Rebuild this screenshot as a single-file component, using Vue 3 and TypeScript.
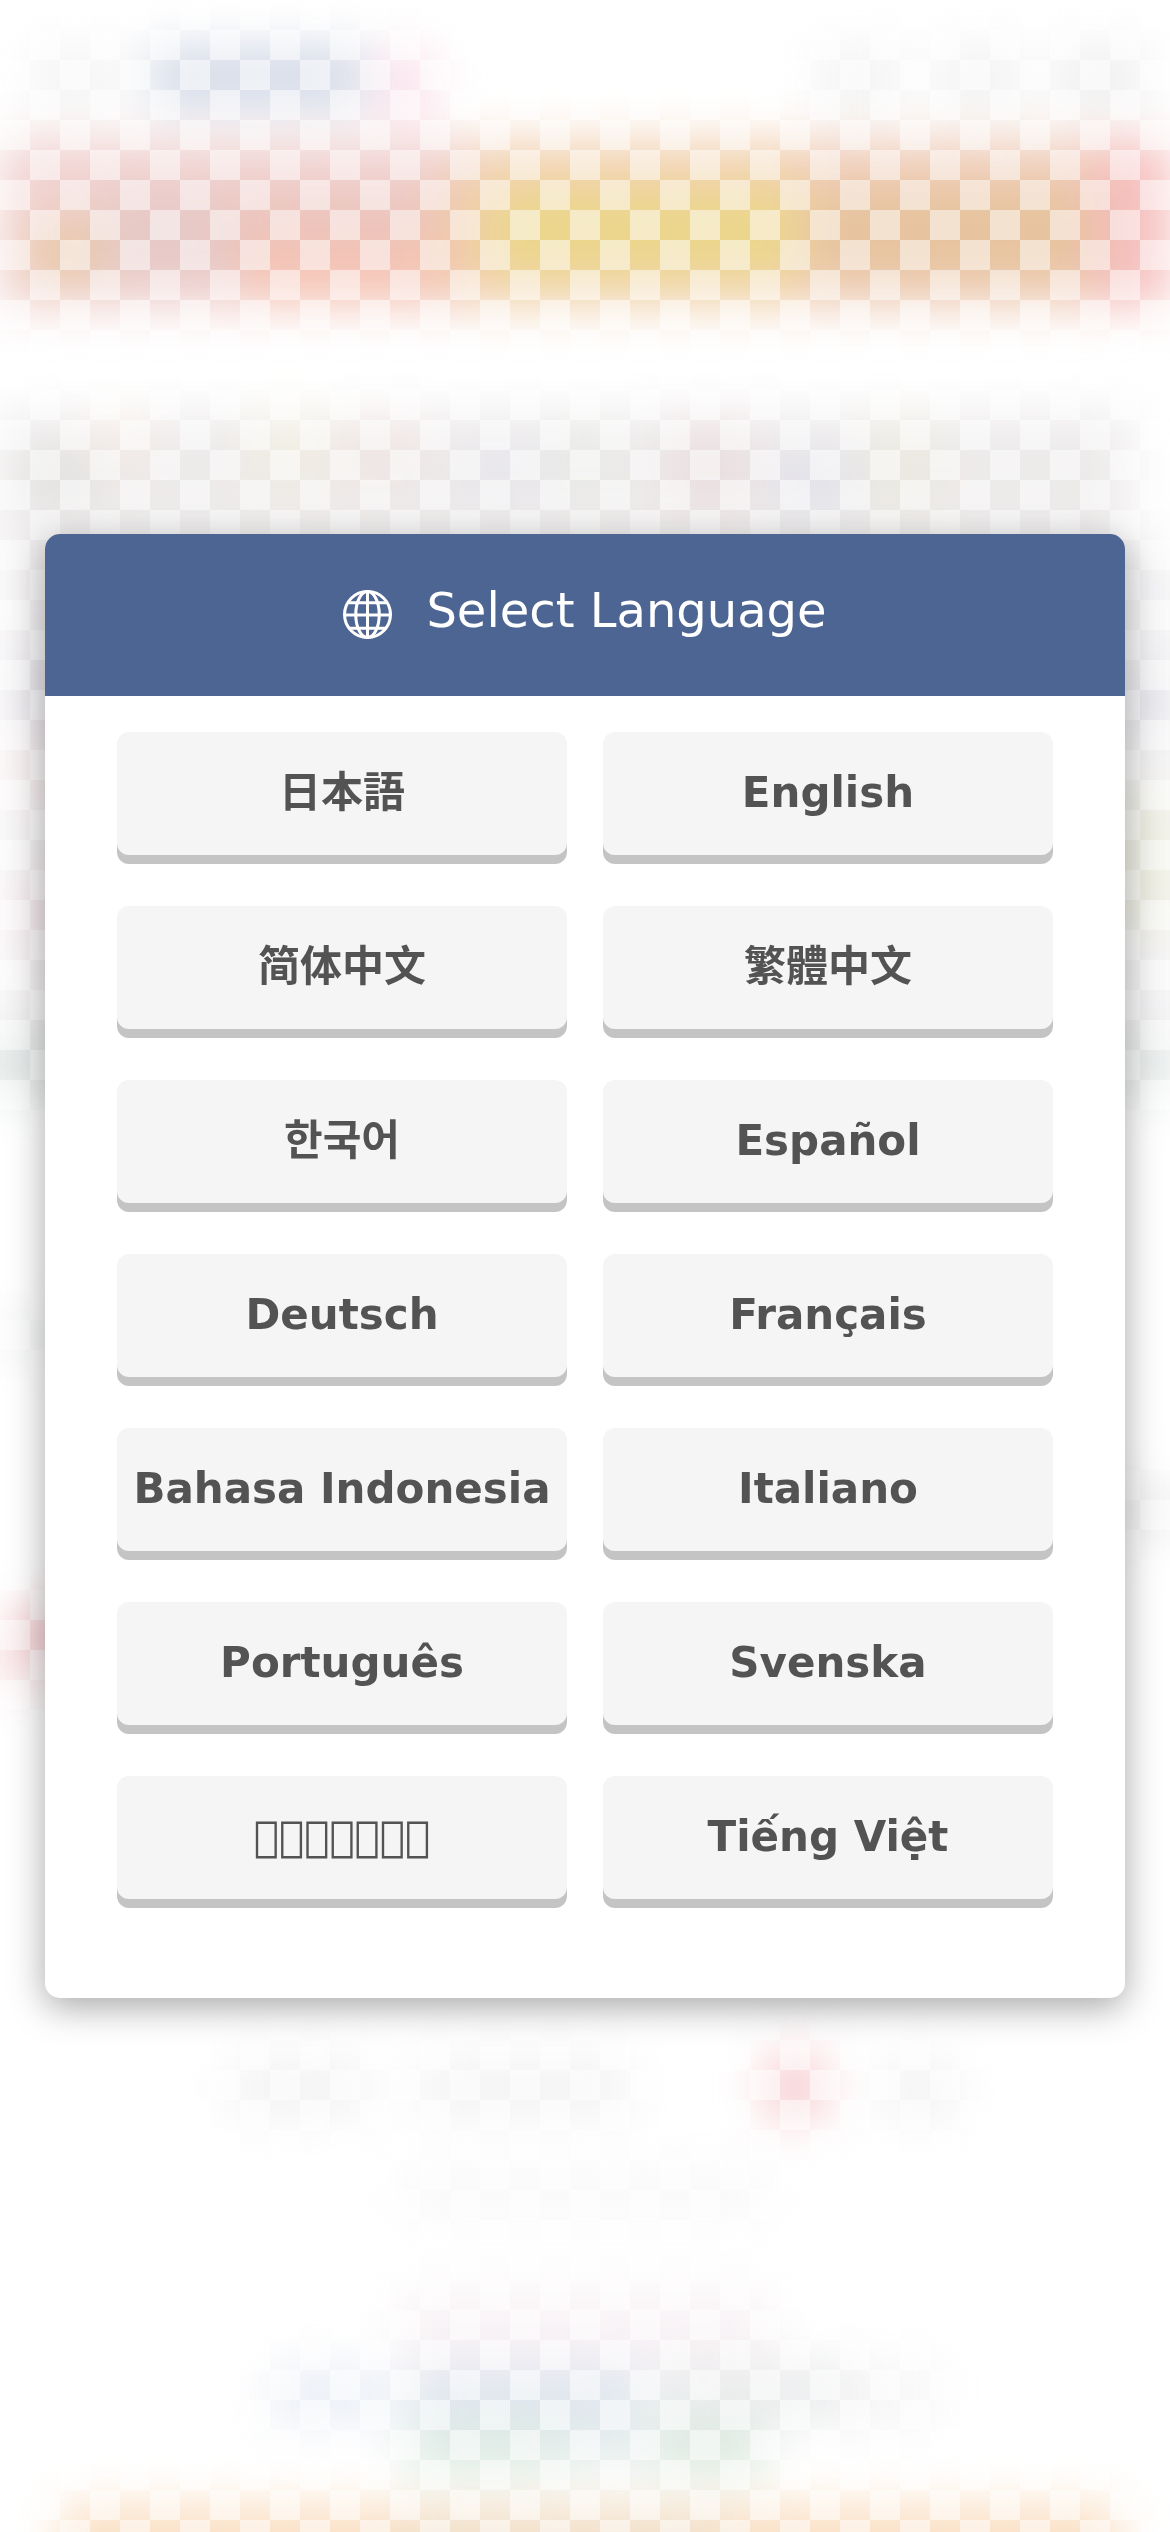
<script setup lang="ts">
interface Language {
  code: string
  label: string
}

/** Soft colour patch behind the dialog: x, y, width, height, fill. */
type Patch = [number, number, number, number, string]

const languages: Language[] = [
  { code: 'ja', label: '日本語' },
  { code: 'en', label: 'English' },
  { code: 'zh-Hans', label: '简体中文' },
  { code: 'zh-Hant', label: '繁體中文' },
  { code: 'ko', label: '한국어' },
  { code: 'es', label: 'Español' },
  { code: 'de', label: 'Deutsch' },
  { code: 'fr', label: 'Français' },
  { code: 'id', label: 'Bahasa Indonesia' },
  { code: 'it', label: 'Italiano' },
  { code: 'pt', label: 'Português' },
  { code: 'sv', label: 'Svenska' },
  { code: 'th', label: '\u{50000}'.repeat(7) },
  { code: 'vi', label: 'Tiếng Việt' },
]

const patches: Patch[] = [
  // top line
  [150, 45, 215, 65, '#d5dbe8'],
  [375, 50, 60, 70, '#fbe2ec'],
  [30, 45, 90, 70, '#f5f5f5'],
  [815, 45, 90, 70, '#f4f4f4'],
  [935, 45, 90, 70, '#f3f3f3'],
  [1055, 45, 90, 70, '#f0f0f0'],
  // banner
  [0, 140, 490, 168, '#f0d2d0'],
  [30, 225, 80, 55, '#e8c8a4'],
  [100, 195, 150, 85, '#e6c9c6'],
  [230, 195, 210, 50, '#ebc3bb'],
  [240, 245, 220, 55, '#f6c4b4'],
  [435, 180, 60, 110, '#f0c9aa'],
  [470, 140, 360, 168, '#f2d2b6'],
  [485, 185, 330, 95, '#ecd68c'],
  [800, 140, 320, 168, '#f0cebc'],
  [810, 185, 280, 95, '#e7c49e'],
  [1090, 142, 80, 163, '#f5bebc'],
  // text lines above and beside the dialog
  [0, 415, 1130, 130, '#edeaea'],
  [20, 450, 80, 50, '#e2e2e0'],
  [90, 415, 60, 50, '#f4ebe6'],
  [250, 415, 80, 70, '#f0ede2'],
  [340, 420, 80, 60, '#efe5e3'],
  [460, 440, 80, 60, '#e8e7ec'],
  [560, 420, 50, 80, '#e8eae7'],
  [670, 420, 80, 90, '#ebdfe0'],
  [770, 450, 80, 60, '#e2e2ea'],
  [870, 420, 60, 90, '#ebe9df'],
  [10, 545, 60, 545, '#efecee'],
  [20, 650, 50, 80, '#dfdce4'],
  [10, 740, 60, 60, '#f3e8e9'],
  [20, 880, 50, 60, '#efdfe2'],
  [-20, 1035, 80, 60, '#dee4e3'],
  [0, 1310, 60, 50, '#f2f3f3'],
  [15, 1610, 50, 55, '#edb0b7'],
  [-10, 1640, 60, 50, '#f7e2e4'],
  [1115, 550, 60, 540, '#f0eff1'],
  [1115, 670, 60, 60, '#e2e0e6'],
  [1115, 790, 60, 140, '#eaeadc'],
  [1115, 1035, 60, 60, '#e0e5e4'],
  [1115, 1480, 60, 60, '#ededed'],
  // below the dialog
  [230, 2058, 140, 60, '#f3f3f3'],
  [420, 2058, 210, 60, '#f3f3f3'],
  [765, 2055, 60, 65, '#f6cccf'],
  [880, 2060, 80, 60, '#f3f3f3'],
  [400, 2165, 370, 55, '#f9f9f9'],
  [400, 2290, 370, 80, '#f9f3f6'],
  [270, 2365, 120, 60, '#ebeff6'],
  [410, 2365, 230, 60, '#e0e6ef'],
  [650, 2360, 200, 65, '#ecedee'],
  [405, 2420, 160, 55, '#deece4'],
  [560, 2420, 90, 50, '#e5edec'],
  [655, 2420, 110, 55, '#dceae0'],
  [850, 2360, 90, 70, '#f7f7f7'],
  [60, 2505, 1060, 80, '#fadfc3'],
  [400, 2515, 330, 70, '#f0dfc8'],
]

const emit = defineEmits<{ select: [code: string] }>()
</script>

<template>
  <svg
    class="backdrop"
    viewBox="0 0 1170 2532"
    preserveAspectRatio="xMidYMid slice"
    aria-hidden="true"
  >
    <defs>
      <filter
        id="soft"
        filterUnits="userSpaceOnUse"
        x="-90"
        y="-90"
        width="1350"
        height="2712"
        color-interpolation-filters="sRGB"
      >
        <feGaussianBlur stdDeviation="24" />
      </filter>
      <pattern id="checker" width="60" height="60" patternUnits="userSpaceOnUse">
        <path d="M0 0h30v30H0zM30 30h30v30H30z" fill="#fff" fill-opacity="0.5" />
      </pattern>
    </defs>
    <g filter="url(#soft)">
      <rect
        v-for="([x, y, width, height, fill], i) in patches"
        :key="i"
        :x="x"
        :y="y"
        :width="width"
        :height="height"
        :fill="fill"
      />
    </g>
    <rect width="1170" height="2532" fill="url(#checker)" />
  </svg>

  <main class="page">
    <section class="dialog" role="dialog" aria-labelledby="dialog-title">
      <header class="dialog-header">
        <h1 id="dialog-title" class="title">
          <svg class="globe" viewBox="0 0 48 48" aria-hidden="true">
            <g fill="none" stroke="currentColor" stroke-width="3">
              <circle cx="24" cy="24" r="22.5" />
              <ellipse cx="24" cy="24" rx="11.5" ry="22.5" />
              <path d="M24 1v46M1 24.5h46M5 12.5h38M5 37.5h38" />
            </g>
          </svg>Select Language
        </h1>
      </header>
      <div class="languages">
        <button
          v-for="language in languages"
          :key="language.code"
          type="button"
          class="language"
          :lang="language.code"
          @click="emit('select', language.code)"
        >
          {{ language.label }}
        </button>
      </div>
    </section>
  </main>
</template>

<style>
body {
  margin: 0;
  background: #fff;
}
</style>

<style scoped>
.backdrop {
  position: fixed;
  inset: 0;
  width: 100%;
  height: 100%;
}

.page {
  position: relative;
  box-sizing: border-box;
  display: flex;
  align-items: center;
  min-height: 100vh;
  padding: 45px;
  font-family: 'DejaVu Sans', 'Noto Sans CJK JP', sans-serif;
}

.dialog {
  flex: 1;
  overflow: hidden;
  border-radius: 15px;
  background: #fff;
  box-shadow: 0 9px 36px rgba(0, 0, 0, 0.35);
}

.dialog-header {
  box-sizing: border-box;
  min-height: 162px;
  padding-top: 52px;
  background: #4d6592;
  color: #fff;
  text-align: center;
}

.title {
  margin: 0;
  font-size: 48px;
  font-weight: 400;
  line-height: 48px;
}

.globe {
  width: 49px;
  height: 49px;
  margin-right: 34px;
  vertical-align: -12px;
}

.languages {
  display: grid;
  grid-template-columns: 1fr 1fr;
  gap: 51px 36px;
  padding: 36px 72px 99px;
}

.language {
  height: 123px;
  padding: 0 0 1px;
  border: 0;
  border-radius: 12px;
  background: #f5f5f5;
  box-shadow: 0 9px 0 #c4c4c4;
  color: #535353;
  font: inherit;
  font-size: 42px;
  font-weight: 700;
  line-height: 48px;
  white-space: nowrap;
  cursor: pointer;
}
</style>
